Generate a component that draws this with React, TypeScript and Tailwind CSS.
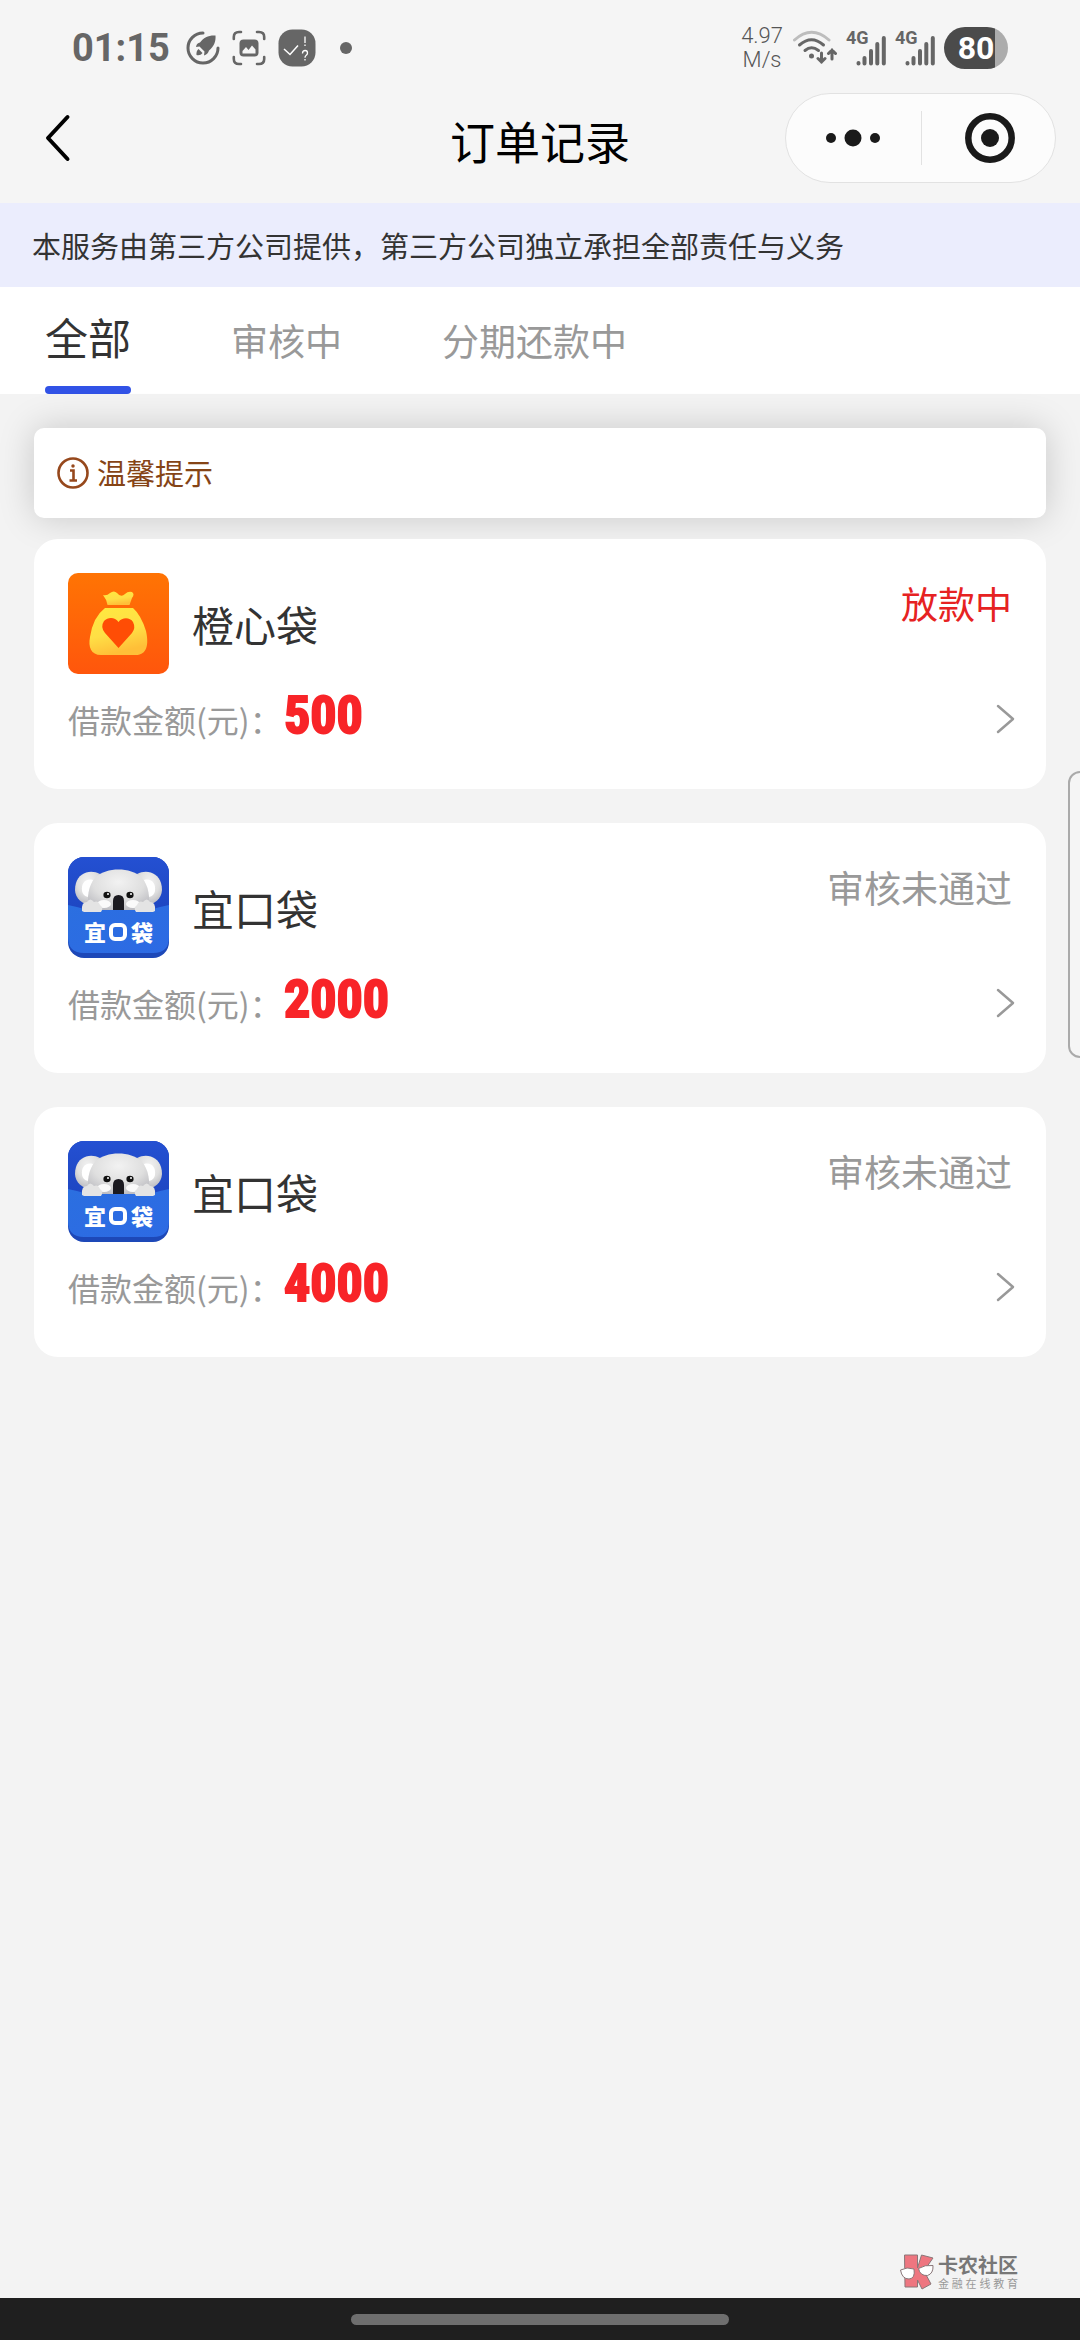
import React from "react";

type Order = {
  id: number;
  name: string;
  logo: "orange" | "koala";
  amount: string;
  status: string;
  active: boolean;
};

const orders: Order[] = [
  { id: 1, name: "橙心袋", logo: "orange", amount: "500", status: "放款中", active: true },
  { id: 2, name: "宜口袋", logo: "koala", amount: "2000", status: "审核未通过", active: false },
  { id: 3, name: "宜口袋", logo: "koala", amount: "4000", status: "审核未通过", active: false },
];

function RocketIcon() {
  return (
    <svg width="34" height="36" viewBox="0 0 34 36" fill="none">
      <path d="M17 3A15 15 0 1 0 32 18" stroke="#666" strokeWidth="3" strokeLinecap="round" />
      <path d="M29.500 5.500C23 5 17.500 7.500 14 12.500C12 13 10.500 14 10 17L13.500 16.500L18.500 21.500L18 25.500C20.500 25 22.300 23 23 20.500C28 16.500 30 11.500 29.500 5.500Z" fill="#666" />
      <path d="M12.500 19L16.500 23C15 25 13 25.500 10.500 25C10.200 22.500 10.700 20.500 12.500 19Z" fill="#666" />
    </svg>
  );
}

function CaptureIcon() {
  return (
    <svg width="34" height="36" viewBox="0 0 34 36" fill="none">
      <path d="M1.800 9V7Q1.800 2 7 2H9M25 2H27Q32.200 2 32.200 7V9M32.200 27V29Q32.200 34 27 34H25M9 34H7Q1.800 34 1.800 29V27" stroke="#666" strokeWidth="2.600" strokeLinecap="round" />
      <rect x="7.500" y="9.500" width="19" height="17" rx="4" fill="#666" />
      <path d="M10.500 23.500V21L14 17L16.500 20L20 15.500L23.500 19.500V23.500Z" fill="#f5f5f5" />
    </svg>
  );
}

function CheckBadgeIcon() {
  return (
    <svg width="38" height="38" viewBox="0 0 38 38" fill="none">
      <rect x="0.500" y="0.500" width="37" height="37" rx="14" fill="#666" />
      <path d="M6 20L12 25.500L20 16.500" stroke="#fff" strokeWidth="1.500" />
      <path d="M27 7.500V14M27 15.500V17M24.500 24.500Q24.500 21.500 27.200 21.500Q29.500 21.500 29.500 24Q29.500 25.500 28 26.500Q27 27.200 27 28.800M27 30V31.500" stroke="#fff" strokeWidth="1.300" />
    </svg>
  );
}

function WifiIcon() {
  return (
    <svg width="44" height="36" viewBox="0 0 44 36" fill="none" strokeLinecap="round">
      <path d="M1.500 10Q18.500 -5.500 36 10" stroke="#bdbdbd" strokeWidth="3" />
      <path d="M6.500 15Q18.500 4.500 30.500 15" stroke="#666" strokeWidth="3" />
      <path d="M12 20.500Q18.500 15 25.500 20.500" stroke="#666" strokeWidth="3" />
      <circle cx="18.500" cy="26" r="2.500" fill="#666" />
      <path d="M28.500 23V32M25 28.500L28.500 32L32 28.500M39 29V20M35.500 23.500L39 20L42.500 23.500" stroke="#666" strokeWidth="3" />
    </svg>
  );
}

function SignalIcon() {
  return (
    <span className="relative block h-9 w-10">
      <span className="absolute left-0 top-0 font-[Roboto] text-[18px] font-bold leading-4 text-[#666]">4G</span>
      <svg className="absolute bottom-0 right-0" width="30" height="32" viewBox="0 0 30 32" stroke="#666" strokeWidth="4" strokeLinecap="round">
        <path d="M2.500 29V29.500M8.500 24V29.500M15 17V29.500M21.300 10V29.500M27.800 4V29.500" />
      </svg>
    </span>
  );
}

function StatusBar() {
  return (
    <div className="flex h-[92px] items-center justify-between px-[72px] pt-1">
      <div className="flex items-center gap-3">
        <span className="w-[102px] font-[Roboto] text-[38px] font-bold leading-10 text-[#666]">01:15</span>
        <RocketIcon />
        <CaptureIcon />
        <CheckBadgeIcon />
        <span className="ml-3 h-3 w-3 rounded-full bg-[#666]" />
      </div>
      <div className="flex items-center gap-[9px]">
        <span className="pr-px text-center font-[Roboto] text-[22px] font-light leading-6 text-[#555]">
          4.97
          <br />
          M/s
        </span>
        <WifiIcon />
        <SignalIcon />
        <SignalIcon />
        <span className="flex h-[42px] w-16 items-center justify-center overflow-hidden rounded-full bg-linear-to-r from-[#4b4b4b] from-80% to-[#acacac] to-80% font-[Roboto] text-[32px] font-bold leading-none text-white">
          80
        </span>
      </div>
    </div>
  );
}

function NavBar() {
  return (
    <header className="grid h-[111px] grid-cols-[1fr_auto_1fr] items-start">
      <button type="button" aria-label="返回" className="ml-11 flex h-[92px] w-7 items-center">
        <svg width="28" height="48" viewBox="0 0 28 48" fill="none" stroke="#000" strokeWidth="4" strokeLinecap="round" strokeLinejoin="round">
          <path d="M23.500 3L4 24L23.500 45" />
        </svg>
      </button>
      <h1 className="text-[45px] leading-[98px] text-black">订单记录</h1>
      <div className="mr-6 mt-px flex h-[90px] w-[271px] items-center justify-self-end rounded-full border border-[#e2e2e2] bg-[#fcfcfc]">
        <button type="button" aria-label="更多" className="flex h-full w-1/2 items-center justify-center">
          <svg width="56" height="20" viewBox="0 0 56 20" fill="#1a1a1a">
            <circle cx="6" cy="10" r="5" />
            <circle cx="28" cy="10" r="8.500" />
            <circle cx="50" cy="10" r="5" />
          </svg>
        </button>
        <span className="h-[54px] w-px bg-[#e2e2e2]" />
        <button type="button" aria-label="关闭" className="flex h-full flex-1 items-center justify-center pl-1">
          <svg width="52" height="52" viewBox="0 0 52 52">
            <circle cx="26" cy="26" r="21.700" fill="none" stroke="#1a1a1a" strokeWidth="6.500" />
            <circle cx="26" cy="26" r="9" fill="#1a1a1a" />
          </svg>
        </button>
      </div>
    </header>
  );
}

function Tabs() {
  return (
    <nav className="flex h-[107px] gap-[100px] bg-white pl-[45px]">
      <button type="button" className="flex flex-col justify-between text-[43px] leading-[99px] text-[#333]">
        全部
        <span className="h-2 w-full rounded-full bg-[#3152e6]" />
      </button>
      <button type="button" className="text-[37px] leading-[99px] text-[#999]">审核中</button>
      <button type="button" className="text-[37px] leading-[99px] text-[#999]">分期还款中</button>
    </nav>
  );
}

function OrangeLogo() {
  return (
    <svg width="101" height="101" viewBox="0 0 101 101" className="shrink-0 rounded-[10px]">
      <defs>
        <linearGradient id="orangeBg" x1="0" y1="0" x2="0" y2="1">
          <stop offset="0" stopColor="#ff7404" />
          <stop offset="1" stopColor="#ff560c" />
        </linearGradient>
        <linearGradient id="bag" x1="0" y1="0" x2="0.300" y2="1">
          <stop offset="0" stopColor="#ffe940" />
          <stop offset="0.600" stopColor="#ffdf45" />
          <stop offset="1" stopColor="#ffbf38" />
        </linearGradient>
      </defs>
      <rect width="101" height="101" fill="url(#orangeBg)" />
      <path d="M35 22Q39 23 42 20Q46 17 49 20Q53 25 57 21Q60 18 64 19Q67 21 64 25L61.500 32H39.500Q39 27 35 22Z" fill="url(#bag)" />
      <path d="M37 35H65Q73 42 78 58C82 76 76 82 68 82H33C23 82 20 74 22 64Q25 44 37 35Z" fill="url(#bag)" />
      <path d="M50.500 49C54 44 62 44 65 49Q68 55 64 60L50.500 75L37 60Q32 54 36 48C40 44 47 44 50.500 49Z" fill="#ff4d05" />
    </svg>
  );
}

function KoalaLogo() {
  return (
    <svg width="101" height="101" viewBox="0 0 101 101" className="shrink-0 rounded-2xl">
      <defs>
        <linearGradient id="koalaBg" x1="0" y1="0" x2="0" y2="1">
          <stop offset="0" stopColor="#2450d2" />
          <stop offset="1" stopColor="#1d45c0" />
        </linearGradient>
        <linearGradient id="pocket" x1="0" y1="0" x2="1" y2="1">
          <stop offset="0" stopColor="#2b6fe0" />
          <stop offset="1" stopColor="#2d6ae4" />
        </linearGradient>
        <radialGradient id="fur" cx="0.500" cy="0.300" r="0.700">
          <stop offset="0" stopColor="#f2f2f2" />
          <stop offset="0.600" stopColor="#dfdfdf" />
          <stop offset="1" stopColor="#bdbdc2" />
        </radialGradient>
      </defs>
      <rect width="101" height="101" fill="#1d48b8" />
      <rect width="101" height="60" fill="url(#koalaBg)" />
      <path d="M32 17C22 12 11 16 8 26C5 36 9 43 17 47L30 44Z" fill="url(#fur)" />
      <path d="M69 17C79 12 90 16 93 26C96 36 92 43 84 47L71 44Z" fill="url(#fur)" />
      <path d="M25 23C17 21 13 27 14 34Q15 39 20 40Z" fill="#fff" />
      <path d="M76 23C84 21 88 27 87 34Q86 39 81 40Z" fill="#fff" />
      <path d="M22 54C18 42 20 28 28 20C38 10 63 10 73 20C81 28 83 42 79 54Z" fill="url(#fur)" />
      <ellipse cx="36" cy="47" rx="7" ry="4" fill="#fafafa" />
      <ellipse cx="65" cy="47" rx="7" ry="4" fill="#fafafa" />
      <path d="M0 48Q10 50 20 53H81Q91 50 101 48V80Q101 96 85 96H16Q0 96 0 80Z" fill="url(#pocket)" />
      <path d="M14 54Q13 45 19 45Q22 40 26 45Q30 43 32 48Q36 51 33 55H16Z" fill="#e4e4e4" />
      <path d="M87 54Q88 45 82 45Q79 40 75 45Q71 43 69 48Q65 51 68 55H85Z" fill="#e4e4e4" />
      <ellipse cx="39" cy="38" rx="3.600" ry="3.200" fill="#111" />
      <ellipse cx="62" cy="38" rx="3.600" ry="3.200" fill="#111" />
      <circle cx="40" cy="37" r="1" fill="#fff" />
      <circle cx="63" cy="37" r="1" fill="#fff" />
      <path d="M45 53V44Q45 38 50.500 38Q56 38 56 44V53Z" fill="#1b1a20" />
      <text x="27" y="84" textAnchor="middle" fontSize="22" fontWeight="900" fill="#fff">宜</text>
      <rect x="43" y="68" width="14" height="14" rx="4" fill="none" stroke="#fff" strokeWidth="4" />
      <text x="74" y="84" textAnchor="middle" fontSize="22" fontWeight="900" fill="#fff">袋</text>
    </svg>
  );
}

function OrderCard({ order }: { order: Order }) {
  return (
    <li className="rounded-3xl bg-white p-[34px]">
      <div className="flex items-start justify-between">
        <div className="flex items-center gap-[23px]">
          {order.logo === "orange" ? <OrangeLogo /> : <KoalaLogo />}
          <h2 className="text-[42px] leading-[64px] text-[#333]">{order.name}</h2>
        </div>
        <span className={order.active ? "text-[37px] leading-[60px] text-[#e62222]" : "text-[37px] leading-[60px] text-[#999]"}>
          {order.status}
        </span>
      </div>
      <a href="#" aria-label={order.name + "订单详情"} className="-mr-[3px] mb-1 mt-3 flex h-[65px] items-center justify-between">
        <span className="flex items-start">
          <span className="w-[216px] whitespace-nowrap text-[32px] leading-[64px] text-[#999]">借款金额(元)：</span>
          <span className="font-['Roboto_Condensed',Roboto] text-[52px] font-bold leading-[58px] text-[#f82428] [-webkit-text-stroke:2px_#f82428]">
            {order.amount}
          </span>
        </span>
        <svg width="20" height="32" viewBox="0 0 20 32" fill="none" stroke="#999" strokeWidth="2.500" strokeLinecap="round" strokeLinejoin="round">
          <path d="M3 3L18 16L3 29" />
        </svg>
      </a>
    </li>
  );
}

function Watermark() {
  return (
    <div className="flex items-center justify-end gap-1 pb-2 pr-[62px]">
      <svg width="34" height="36" viewBox="0 0 34 36" stroke="#8a7779" strokeWidth="1">
        <path d="M4.500 1H17.500V14L21.500 1L33 4L24 17L31 30L22 35L17.500 26V33H5Z" fill="#ee7680" />
        <path d="M0.500 16Q7 12.500 14 15Q15.500 24.500 9 25Q2 25 0.500 16Z" fill="#fff" />
        <path d="M18.500 14.500Q25 10.500 33 11.500Q33.500 19.500 27.500 21.500Q20 22 18.500 14.500Z" fill="#fff" />
      </svg>
      <div className="text-[#777]">
        <p className="text-[20px] font-bold leading-[22px]">卡农社区</p>
        <p className="flex justify-between text-[11px] leading-[14px] text-[#999]">
          {Array.from("金融在线教育").map((char) => (
            <span key={char}>{char}</span>
          ))}
        </p>
      </div>
    </div>
  );
}

export default function App() {
  return (
    <div className="relative flex min-h-screen flex-col overflow-hidden bg-[#f3f3f3] font-['Noto_Sans_CJK_SC',sans-serif]">
      <div className="bg-[#f5f5f5]">
        <StatusBar />
        <NavBar />
      </div>
      <p className="bg-[#ebedfd] pl-8 text-[29px] leading-[84px] text-[#333]">
        本服务由第三方公司提供，第三方公司独立承担全部责任与义务
      </p>
      <Tabs />
      <main className="flex-1 px-[34px] pt-[34px]">
        <section className="flex h-[90px] items-center gap-2 rounded-[10px] bg-white pl-[23px] text-[29px] text-[#854416] shadow-[0_0_36px_rgba(0,0,0,0.18)]">
          <svg width="32" height="32" viewBox="0 0 32 32" fill="none" stroke="#96481c" strokeWidth="2.600">
            <circle cx="16" cy="16" r="14.500" />
            <path d="M13 13.500H16.500V23M12.500 23.500H20" />
            <circle cx="16" cy="9" r="1" fill="#96481c" strokeWidth="1.500" />
          </svg>
          温馨提示
        </section>
        <ul className="relative mt-[21px] flex flex-col gap-[34px]">
          {orders.map((order) => (
            <OrderCard key={order.id} order={order} />
          ))}
        </ul>
      </main>
      <Watermark />
      <footer className="flex h-[42px] items-center justify-center bg-[#1f1f1f]">
        <span className="h-[11px] w-[35%] rounded-full bg-[#6e6e6e]" />
      </footer>
      <aside className="absolute -right-4 top-[771px] h-[287px] w-7 rounded-xl border-2 border-[#aaa] bg-[#f5f5f5]" />
    </div>
  );
}
